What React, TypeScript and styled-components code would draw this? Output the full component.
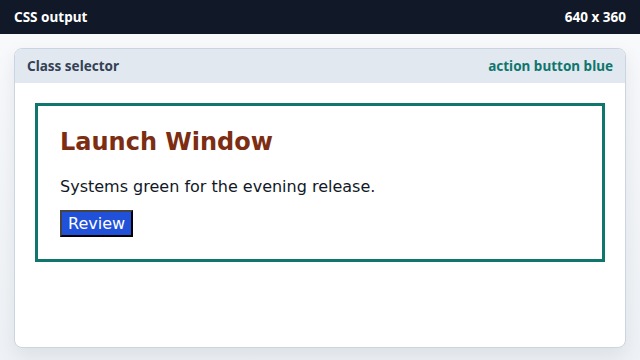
import React from "react";
import styled, { createGlobalStyle } from "styled-components";

const Global = createGlobalStyle`
  html, body { margin: 0; padding: 0; }
  body {
    width: 640px;
    height: 360px;
    overflow: hidden;
    background: linear-gradient(180deg, #f8fafc 0%, #eef1f5 100%);
    font-family: "Noto Sans", "DejaVu Sans", sans-serif;
  }
`;

const Page = styled.div`
  width: 640px;
  height: 360px;
  display: flex;
  flex-direction: column;
`;

const TopBar = styled.header`
  height: 34px;
  background: #111827;
  color: #ffffff;
  display: flex;
  align-items: center;
  justify-content: space-between;
  padding: 0 14px;
  font-size: 13.5px;
  font-weight: 700;
  flex-shrink: 0;
`;

const Stage = styled.main`
  flex: 1;
  padding: 14px 14px 12px;
  display: flex;
`;

const Panel = styled.section`
  flex: 1;
  background: #ffffff;
  border: 1px solid #cbd5e1;
  border-radius: 8px;
  overflow: hidden;
  display: flex;
  flex-direction: column;
  box-shadow: 0 8px 20px rgba(15, 23, 42, 0.08);
`;

const PanelHead = styled.div`
  height: 34px;
  background: #e2e8f0;
  display: flex;
  align-items: center;
  justify-content: space-between;
  padding: 0 12px;
  font-size: 13.5px;
  font-weight: 700;
  flex-shrink: 0;
`;

const HeadLabel = styled.span<{ $accent?: boolean }>`
  color: ${(p) => (p.$accent ? "#0f766e" : "#334155")};
`;

const PanelBody = styled.div`
  padding: 20px 20px;
`;

const Card = styled.div`
  border: 3px solid #0f766e;
  padding: 20px 22px 22px;
  font-family: "DejaVu Sans", sans-serif;
`;

const Title = styled.h2`
  margin: 0 0 18px;
  font-size: 24px;
  line-height: 32px;
  font-weight: 700;
  color: #7c2d12;
`;

const Text = styled.p`
  margin: 0 0 12px;
  font-size: 16px;
  line-height: 22px;
  color: #111827;
`;

const ActionButton = styled.button`
  display: block;
  margin: 0;
  padding: 2px 6px;
  background: #2150d9;
  color: #ffffff;
  border: 2px solid;
  border-color: #444 #000 #000 #444;
  font-family: "DejaVu Sans", sans-serif;
  font-size: 16px;
  line-height: 19px;
`;

export default function App() {
  return (
    <Page>
      <Global />
      <TopBar>
        <span>CSS output</span>
        <span>640 x 360</span>
      </TopBar>
      <Stage>
        <Panel>
          <PanelHead>
            <HeadLabel>Class selector</HeadLabel>
            <HeadLabel $accent>action button blue</HeadLabel>
          </PanelHead>
          <PanelBody>
            <Card>
              <Title>Launch Window</Title>
              <Text>Systems green for the evening release.</Text>
              <ActionButton>Review</ActionButton>
            </Card>
          </PanelBody>
        </Panel>
      </Stage>
    </Page>
  );
}
